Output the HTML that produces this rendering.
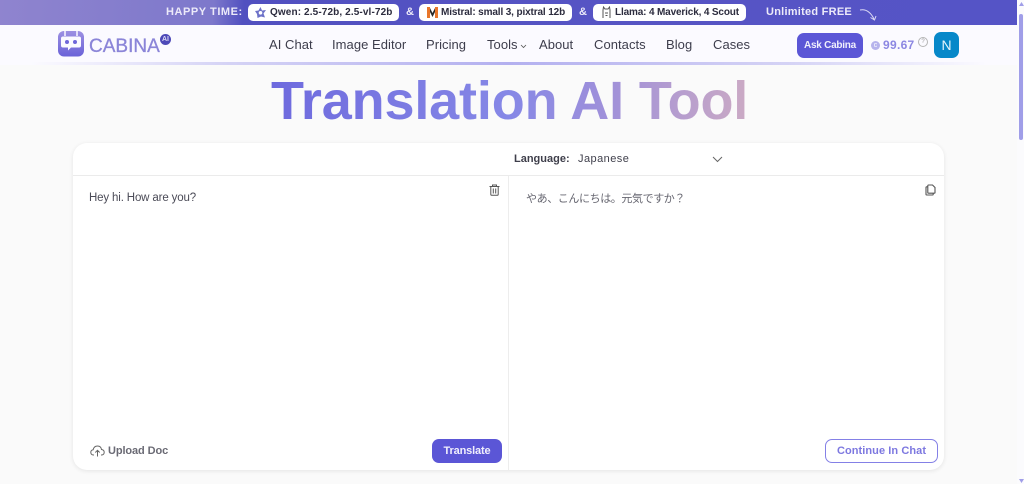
<!DOCTYPE html>
<html><head><meta charset="utf-8">
<style>
html,body{margin:0;padding:0;width:1024px;height:484px;overflow:hidden;background:#fafafa;font-family:"Liberation Sans","Noto Sans CJK JP",sans-serif;}
.a{position:absolute;white-space:nowrap;}
.pill{position:absolute;top:4px;height:17px;background:#fff;border-radius:5px;}
.pt{position:absolute;top:2px;font-size:10px;line-height:14px;font-weight:700;color:#2c2c3e;white-space:nowrap;}
.hw{position:absolute;top:4px;line-height:17px;font-size:11px;font-weight:700;color:#eceaf9;letter-spacing:.55px;white-space:nowrap;}
.nav{position:absolute;top:37px;font-size:13px;line-height:16px;color:#3d3d4c;letter-spacing:.05px;white-space:nowrap;}
</style></head>
<body>
<div class="a" style="left:0;top:0;width:1017px;height:25px;background:linear-gradient(95deg,#8f84cf 0%,#7d78cb 21%,#5150c0 24%,#5654c4 60%,#5554c6 100%);"></div>
<div class="a" style="left:0;top:25px;width:1017px;height:38px;background:#fbfaff;"></div>
<div class="a" style="left:0;top:62px;width:1017px;height:3px;background:linear-gradient(90deg,#fbfaff 3%,#d5d3f5 22%,#b3b0ef 50%,#d5d3f5 78%,#fbfaff 97%);"></div>

<div class="hw" style="left:166px;">HAPPY TIME:</div>
<div class="pill" style="left:248px;width:151px;">
<svg class="a" style="left:6px;top:2px" width="13" height="13" viewBox="0 0 13 13"><path d="M6.5 1L8 4.5 12 4 9.5 7.5 11 11.5 7 10.5 3.500 12 3 8 1 5 4.500 4.500Z" fill="#6d72c8"/><circle cx="6.500" cy="6.800" r="1.800" fill="#fff"/></svg>
<span class="pt" style="left:22px;letter-spacing:.12px">Qwen: 2.5-72b, 2.5-vl-72b</span></div>
<div class="hw" style="left:406px;">&amp;</div>
<div class="pill" style="left:419px;width:153px;">
<svg class="a" style="left:7px;top:2px" width="13" height="13" viewBox="0 0 13 13"><rect x="1" y="1" width="3" height="11" fill="#e8762a"/><rect x="9" y="1" width="3" height="11" fill="#e8762a"/><path d="M4 2L6.500 7 9 2V6L6.500 11 4 6Z" fill="#2a2a2a"/></svg>
<span class="pt" style="left:22px;letter-spacing:-.13px">Mistral: small 3, pixtral 12b</span></div>
<div class="hw" style="left:579px;">&amp;</div>
<div class="pill" style="left:593px;width:153px;">
<svg class="a" style="left:7px;top:2px" width="13" height="13" viewBox="0 0 13 13" fill="none" stroke="#555" stroke-width="1"><path d="M3 12V4L3.500 1 5 3H8L9.500 1 10 4V12"/><path d="M5 7H8M5.500 9.500H7.500"/></svg>
<span class="pt" style="left:22px;letter-spacing:-.15px">Llama: 4 Maverick, 4 Scout</span></div>
<div class="hw" style="left:766px;letter-spacing:.25px">Unlimited FREE</div>
<svg class="a" style="left:859px;top:8px" width="18" height="14" viewBox="0 0 18 14" fill="none" stroke="#dcdaf5" stroke-width="1"><path d="M1 2C6 1 11 3 15 11M11.500 9.500L15.500 12 17 8"/></svg>

<!-- logo -->
<svg class="a" style="left:58px;top:30px" width="27" height="27" viewBox="0 0 27 27"><defs><linearGradient id="g" x1="0" y1="0" x2="0" y2="1"><stop offset="0" stop-color="#9d90e2"/><stop offset="1" stop-color="#6a62d8"/></linearGradient></defs><rect x="0" y="1" width="26" height="25.500" rx="6" fill="url(#g)"/><path d="M7 1V6M19 1V6" stroke="#fbfaff" stroke-width="1.500"/><path d="M5 7H21Q23 7 23 9V16Q23 18 21 18H13L10 21V18H5Q3 18 3 16V9Q3 7 5 7Z" fill="#fbfaff" transform="translate(0 -.5)"/><circle cx="9" cy="12" r="2" fill="#6f66da"/><circle cx="17" cy="12" r="2" fill="#6f66da"/></svg>
<div class="a" style="left:89px;top:36px;font-size:19px;line-height:22px;font-weight:400;color:#8b85d8;letter-spacing:0;-webkit-text-stroke:.3px #8b85d8;">CABINA</div>
<div class="a" style="left:160px;top:34px;width:11px;height:11px;border-radius:50%;background:#4d49b8;color:#dcdaf5;font-size:7px;line-height:11px;text-align:center;font-weight:700;">AI</div>

<div class="nav" style="left:269px">AI Chat</div>
<div class="nav" style="left:332px">Image Editor</div>
<div class="nav" style="left:426px">Pricing</div>
<div class="nav" style="left:487px">Tools</div>
<svg class="a" style="left:520px;top:44px" width="7" height="5" viewBox="0 0 7 5" fill="none" stroke="#555" stroke-width=".8"><path d="M1 1L3.500 3.500 6 1"/></svg>
<div class="nav" style="left:539px">About</div>
<div class="nav" style="left:594px">Contacts</div>
<div class="nav" style="left:666px">Blog</div>
<div class="nav" style="left:713px">Cases</div>

<div class="a" style="left:797px;top:33px;width:66px;height:25px;border-radius:7px;background:#5b56d6;color:#f0effc;font-size:10px;font-weight:700;line-height:25px;text-align:center;letter-spacing:-.25px;">Ask Cabina</div>
<div class="a" style="left:871px;top:41px;width:9px;height:9px;border-radius:50%;background:#b6b3ec;color:#fff;font-size:7px;line-height:9px;text-align:center;">c</div>
<div class="a" style="left:883px;top:37px;font-size:12px;line-height:16px;font-weight:700;color:#8c87e2;letter-spacing:.3px;">99.67</div>
<div class="a" style="left:918px;top:37px;width:8px;height:8px;border:1px solid #b5b5b5;border-radius:50%;color:#999;font-size:6px;line-height:8px;text-align:center;">?</div>
<div class="a" style="left:934px;top:32px;width:25px;height:26px;border-radius:7px;background:#0788c9;color:#e6f4fb;font-size:14px;line-height:26px;text-align:center;">N</div>

<!-- title -->
<div class="a" id="t" style="left:271px;top:70px;font-size:54px;line-height:62px;font-weight:700;letter-spacing:-.15px;color:transparent;background:linear-gradient(90deg,#6e6ade 0%,#8688e6 50%,#9f90da 70%,#cbaac4 100%);-webkit-background-clip:text;background-clip:text;">Translation AI Tool</div>

<!-- card -->
<div class="a" style="left:73px;top:143px;width:871px;height:327px;background:#fff;border-radius:14px;box-shadow:0 1px 5px rgba(0,0,0,.09);"></div>
<div class="a" style="left:73px;top:175px;width:871px;height:1px;background:#ebebeb;"></div>
<div class="a" style="left:508px;top:176px;width:1px;height:294px;background:#ededed;"></div>

<div class="a" style="left:514px;top:152px;font-size:11px;line-height:14px;font-weight:700;color:#3f3f4b;letter-spacing:0;">Language:</div>
<div class="a" style="left:578px;top:152px;font-size:11px;line-height:14px;color:#3f3f4b;letter-spacing:.45px;">Japanese</div>
<svg class="a" style="left:712px;top:156px" width="11" height="7" viewBox="0 0 11 7" fill="none" stroke="#666" stroke-width="1"><path d="M1 1L5.500 5.500 10 1"/></svg>

<div class="a" style="left:89px;top:191px;font-size:11.5px;line-height:15px;color:#4b4b57;letter-spacing:-.15px;">Hey hi. How are you?</div>
<div class="a" style="left:526px;top:191px;font-size:11px;line-height:15px;color:#666670;letter-spacing:-.4px;font-family:'Noto Sans CJK JP','Liberation Sans',sans-serif;">やあ、こんにちは。元気ですか？</div>

<svg class="a" style="left:489px;top:184px" width="11" height="12" viewBox="0 0 11 12" fill="none" stroke="#555" stroke-width="1"><path d="M.5 2.500H10.500M3.500 2.500V1H7.500V2.500M1.800 2.500V10.200Q1.800 11.300 3 11.300H8Q9.200 11.300 9.200 10.200V2.500M4.300 4.500V9.500M6.700 4.500V9.500"/></svg>
<svg class="a" style="left:925px;top:184px" width="11" height="12" viewBox="0 0 11 12" fill="none" stroke="#555" stroke-width="1.100"><path d="M3.500 1H7.500L10 3.500V8.500Q10 9.200 9.300 9.200H3.500Q2.800 9.200 2.800 8.500V1.700Q2.800 1 3.500 1Z"/><path d="M2.800 2.800H1.700Q1 2.800 1 3.500V10.300Q1 11 1.700 11H7.500Q8.200 11 8.200 10.300V9.200"/></svg>

<svg class="a" style="left:90px;top:445px" width="15" height="12" viewBox="0 0 15 12" fill="none" stroke="#666" stroke-width="1"><path d="M4 10H3.500Q.8 10 .8 7.300 .8 5 3.200 4.700 4 1 7.500 1 11 1 11.500 4.500 14.200 4.800 14.200 7.300 14.200 10 11.500 10H11M7.500 11.500V5.500M5.300 7.500L7.500 5.300 9.700 7.500"/></svg>
<div class="a" style="left:108px;top:444px;font-size:11px;line-height:15px;font-weight:700;color:#6a6a74;letter-spacing:-.1px;">Upload Doc</div>

<div class="a" style="left:432px;top:439px;width:70px;height:24px;border-radius:7px;background:#5b56d6;color:#f0effc;font-size:11px;font-weight:700;line-height:24px;text-align:center;letter-spacing:-.15px;">Translate</div>
<div class="a" style="left:825px;top:439px;width:111px;height:22px;border:1px solid #8480e6;border-radius:7px;background:#fff;color:#7d78e0;font-size:11px;font-weight:700;line-height:22px;text-align:center;letter-spacing:.07px;">Continue In Chat</div>

<!-- scrollbar -->
<div class="a" style="left:1017px;top:0;width:7px;height:484px;background:#fbfbfd;"></div>
<div class="a" style="left:1019px;top:14px;width:4px;height:126px;background:#a09ee8;border-radius:2px;"></div>
<svg class="a" style="left:1019px;top:2px" width="5" height="4"><path d="M2.500 0L5 4H0Z" fill="#a09ee8"/></svg>
<svg class="a" style="left:1019px;top:479px" width="5" height="4"><path d="M2.500 4L5 0H0Z" fill="#a09ee8"/></svg>
</body></html>
